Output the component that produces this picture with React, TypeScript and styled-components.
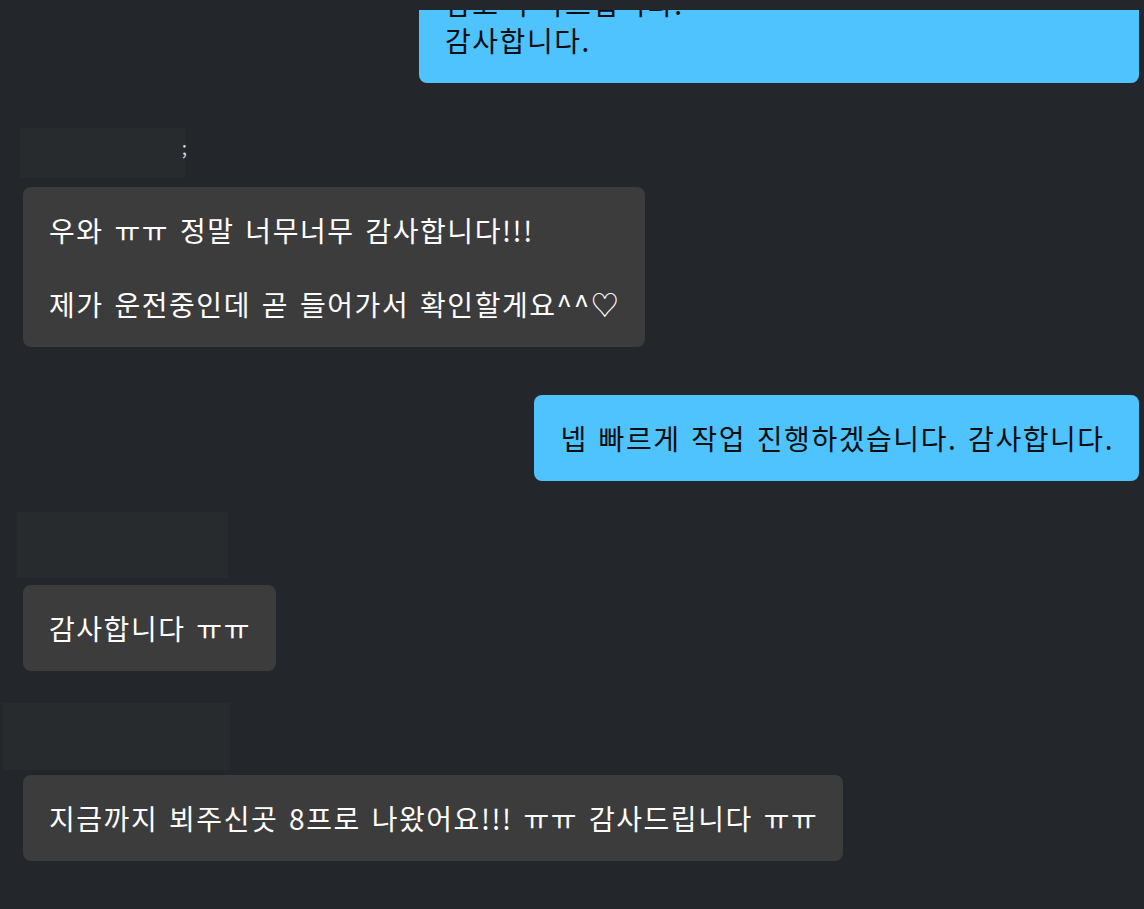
import React from "react";
import styled, { createGlobalStyle } from "styled-components";

const GlobalStyle = createGlobalStyle`
  html, body {
    margin: 0;
    padding: 0;
    background: #23272b;
  }
  body {
    font-family: "Noto Sans CJK KR", "Noto Sans", sans-serif;
  }
`;

const Screen = styled.div`
  width: 1144px;
  height: 909px;
  overflow: hidden;
  background: #23272b;
  padding-top: 10px;
  box-sizing: border-box;
`;

const Thread = styled.div`
  height: 100%;
  overflow: hidden;
  display: flex;
  flex-direction: column;
  padding-right: 5px;
`;

const Bubble = styled.div<{ $out?: boolean; $top: number; $width?: number }>`
  align-self: ${(p) => (p.$out ? "flex-end" : "flex-start")};
  margin-top: ${(p) => p.$top}px;
  margin-left: ${(p) => (p.$out ? 0 : 23)}px;
  width: ${(p) => (p.$width ? `${p.$width}px` : "auto")};
  box-sizing: border-box;
  flex-shrink: 0;
  padding: 25px 25px 24px 26px;
  border-radius: 8px;
  background: ${(p) => (p.$out ? "#4fc3fe" : "#3c3c3c")};
  color: ${(p) => (p.$out ? "#0b0d0f" : "#ffffff")};
  font-size: 28px;
  line-height: 37px;
  letter-spacing: 1.55px;
  word-spacing: 3px;
  white-space: pre-line;
`;

const SenderName = styled.div<{ $top: number; $left: number; $w: number; $h: number }>`
  flex-shrink: 0;
  align-self: flex-start;
  margin-top: ${(p) => p.$top}px;
  margin-left: ${(p) => p.$left}px;
  width: ${(p) => p.$w}px;
  height: ${(p) => p.$h}px;
  background: #272b2e;
  position: relative;
`;

const NameTail = styled.span`
  position: absolute;
  right: -2px;
  top: 8px;
  font-size: 19px;
  line-height: 22px;
  color: #d8d8d8;
`;

export default function App() {
  return (
    <>
      <GlobalStyle />
      <Screen>
        <Thread>
          <Bubble $out $top={-50} $width={720}>
            {"참고 부탁드립니다.\n감사합니다."}
          </Bubble>

          <SenderName $top={45} $left={20} $w={165} $h={50}>
            <NameTail>;</NameTail>
          </SenderName>
          <Bubble $top={9}>
            {"우와 ㅠㅠ 정말 너무너무 감사합니다!!!\n\n제가 운전중인데 곧 들어가서 확인할게요^^♡"}
          </Bubble>

          <Bubble $out $top={48}>
            넵 빠르게 작업 진행하겠습니다. 감사합니다.
          </Bubble>

          <SenderName $top={31} $left={17} $w={211} $h={66} />
          <Bubble $top={7}>감사합니다 ㅠㅠ</Bubble>

          <SenderName $top={32} $left={3} $w={227} $h={67} />
          <Bubble $top={5}>지금까지 뵈주신곳 8프로 나왔어요!!! ㅠㅠ 감사드립니다 ㅠㅠ</Bubble>
        </Thread>
      </Screen>
    </>
  );
}
